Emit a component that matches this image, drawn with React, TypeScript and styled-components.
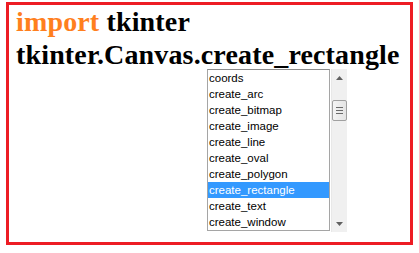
import React from "react";
import styled, { createGlobalStyle } from "styled-components";

const GlobalStyle = createGlobalStyle`
  html, body {
    margin: 0;
    padding: 0;
    background: #ffffff;
  }
`;

const Frame = styled.div`
  box-sizing: border-box;
  margin: 2px 0 0 6px;
  width: 407px;
  height: 243px;
  border: 3px solid #ed1c24;
  padding: 0 0 0 7px;
  display: flex;
  flex-direction: column;
`;

const Heading = styled.div`
  font-family: "Liberation Serif", "Times New Roman", serif;
  font-weight: bold;
  font-size: 28px;
  line-height: 33px;
  letter-spacing: 0.15px;
  color: #000;
  white-space: nowrap;
`;

const Keyword = styled.span`
  color: #ff7f1e;
`;

const ListRow = styled.div`
  display: flex;
  align-items: flex-start;
  gap: 1px;
  margin: -2px 0 0 191px;
`;

const ListBox = styled.ul`
  box-sizing: border-box;
  list-style: none;
  margin: 0;
  padding: 0;
  width: 123px;
  height: 162px;
  border: 1px solid #a5a5a5;
  border-top-color: #8c8c8c;
  background: #fff;
  overflow: hidden;
`;

const Item = styled.li<{ $selected?: boolean }>`
  height: 16px;
  line-height: 16px;
  padding-left: 1px;
  font-family: "Liberation Sans", Arial, sans-serif;
  font-size: 11.5px;
  color: ${(p) => (p.$selected ? "#ffffff" : "#000000")};
  background: ${(p) => (p.$selected ? "#3399ff" : "transparent")};
  white-space: nowrap;
`;

const ScrollBar = styled.div`
  box-sizing: border-box;
  width: 16px;
  height: 163px;
  background: #f0f0f0;
  border-left: 1px solid #e8e8e8;
  display: flex;
  flex-direction: column;
  align-items: stretch;
`;

const ArrowButton = styled.div`
  height: 17px;
  display: flex;
  align-items: center;
  justify-content: center;
`;

const Track = styled.div`
  flex: 1;
  padding-top: 14px;
`;

const Thumb = styled.div`
  box-sizing: border-box;
  height: 21px;
  border: 1px solid #a0a0a0;
  border-radius: 2px;
  background: linear-gradient(to right, #f4f4f4, #e4e4e4);
  display: flex;
  align-items: center;
  justify-content: center;
`;

const items = [
  "coords",
  "create_arc",
  "create_bitmap",
  "create_image",
  "create_line",
  "create_oval",
  "create_polygon",
  "create_rectangle",
  "create_text",
  "create_window",
];

export default function App() {
  return (
    <>
      <GlobalStyle />
      <Frame>
        <Heading>
          <Keyword>import</Keyword> tkinter
        </Heading>
        <Heading>tkinter.Canvas.create_rectangle</Heading>
        <ListRow>
          <ListBox>
            {items.map((name) => (
              <Item key={name} $selected={name === "create_rectangle"}>
                {name}
              </Item>
            ))}
          </ListBox>
          <ScrollBar>
            <ArrowButton>
              <svg width="7" height="4" viewBox="0 0 7 4">
                <path d="M3.5 0 L7 4 L0 4 Z" fill="#606060" />
              </svg>
            </ArrowButton>
            <Track>
              <Thumb>
                <svg width="7" height="7" viewBox="0 0 7 7">
                  <path d="M0 0.5 H7 M0 3.5 H7 M0 6.5 H7" stroke="#6a6a6a" strokeWidth="1" />
                </svg>
              </Thumb>
            </Track>
            <ArrowButton>
              <svg width="7" height="4" viewBox="0 0 7 4">
                <path d="M0 0 L7 0 L3.5 4 Z" fill="#606060" />
              </svg>
            </ArrowButton>
          </ScrollBar>
        </ListRow>
      </Frame>
    </>
  );
}
